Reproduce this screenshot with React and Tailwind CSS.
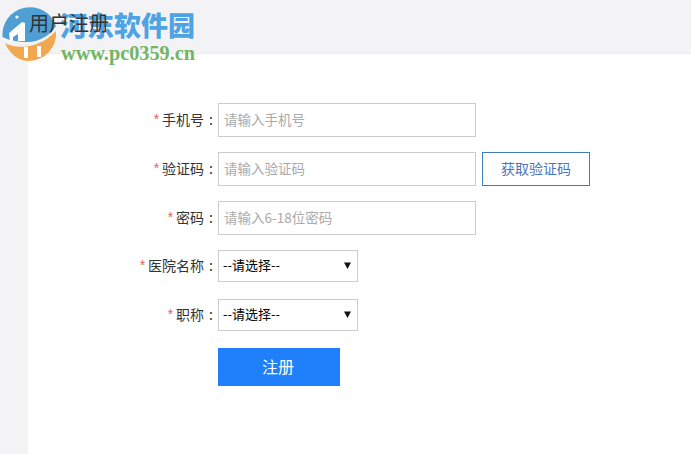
const CJK = "font-['Noto_Sans_CJK_SC','Noto_Sans',sans-serif]";

function Label({ children }) {
  return (
    <label className="w-[190px] shrink-0 flex justify-end items-center pb-[2px] text-[14px] text-[#333] whitespace-nowrap">
      <span className="text-[#e0645c] mr-[3px] font-['Liberation_Sans',sans-serif]">*</span>
      {children}
      <span className="ml-[5px] mr-[5px]">:</span>
    </label>
  );
}

function TextField({ placeholder }) {
  return (
    <input
      type="text"
      placeholder={placeholder}
      className="w-[258px] h-[34px] border border-[#ccc] bg-white px-[5px] pb-[2px] text-[13.5px] outline-none placeholder:text-[#aaa]"
    />
  );
}

function SelectField() {
  return (
    <div className="relative w-[140px] h-[32px]">
      <select className="w-full h-full border border-[#ccc] bg-white pl-[4px] pb-[2px] text-[13px] text-black outline-none appearance-none">
        <option>--请选择--</option>
      </select>
      <svg className="absolute right-[7px] top-[12px]" width="7" height="7" viewBox="0 0 7 7">
        <path d="M0 0.5H7L3.5 7Z" fill="#111" />
      </svg>
    </div>
  );
}

function Watermark() {
  return (
    <div className="absolute left-0 top-0 w-[200px] h-[64px] pointer-events-none">
      <svg className="absolute left-0 top-0" width="60" height="64" viewBox="0 0 60 64">
        <path d="M2.5 37A27.5 27.5 0 0 1 56 26C50 36 38 42 28 42C18 42 8 40 2.5 37Z" fill="#4f9fd4" />
        <path d="M5 43C15 49 38 50 56 31A27.5 27.5 0 0 1 29 61C18 61 10 54 5 43Z" fill="#f2a84e" />
        <path d="M24 47h4v11h-4zM37 46h4v11h-4z" fill="#fff" />
        <path d="M9 33L22 22L25 23V41H18V34L13 37V41H10Z" fill="#fff" />
        <circle cx="17" cy="17" r="1.6" fill="#fff" />
      </svg>
      <span className="absolute left-[60px] top-[5px] text-[27px] leading-[40px] font-black text-[#4da3e4] whitespace-nowrap font-['Noto_Sans_CJK_SC',sans-serif]">
        河东软件园
      </span>
      <span className="absolute left-[61px] top-[41px] text-[20.3px] leading-[24px] font-bold text-[#72b565] whitespace-nowrap font-['Liberation_Serif',serif]">
        www.pc0359.cn
      </span>
    </div>
  );
}

export default function App() {
  return (
    <div className={`relative w-[691px] h-[454px] overflow-hidden bg-[#f3f2f5] ${CJK}`}>
      <header className="h-[54px] pl-[29px] pt-[7px] border-b border-[#ececee]">
        <h1 className="relative z-10 text-[20px] leading-[32px] text-[#333]">用户注册</h1>
      </header>

      <main className="ml-[28px] h-[400px] bg-white pt-[49px]">
        <form className="flex flex-col">
          <div className="flex h-[34px] mb-[15px]">
            <Label>手机号</Label>
            <TextField placeholder="请输入手机号" />
          </div>
          <div className="flex h-[34px] mb-[15px]">
            <Label>验证码</Label>
            <TextField placeholder="请输入验证码" />
            <button
              type="button"
              className="ml-[6px] w-[108px] h-[34px] border border-[#3f7fb5] pb-[2px] text-[14px] text-[#4a76c0] bg-white"
            >
              获取验证码
            </button>
          </div>
          <div className="flex h-[34px] mb-[15px]">
            <Label>密码</Label>
            <TextField placeholder="请输入6-18位密码" />
          </div>
          <div className="flex h-[32px] mb-[17px]">
            <Label>医院名称</Label>
            <SelectField />
          </div>
          <div className="flex h-[32px] mb-[17px]">
            <Label>职称</Label>
            <SelectField />
          </div>
          <div className="pl-[190px]">
            <button type="button" className="w-[122px] h-[38px] bg-[#2080fb] pb-[3px] pr-[2px] text-white text-[16px]">
              注册
            </button>
          </div>
        </form>
      </main>

      <Watermark />
    </div>
  );
}
